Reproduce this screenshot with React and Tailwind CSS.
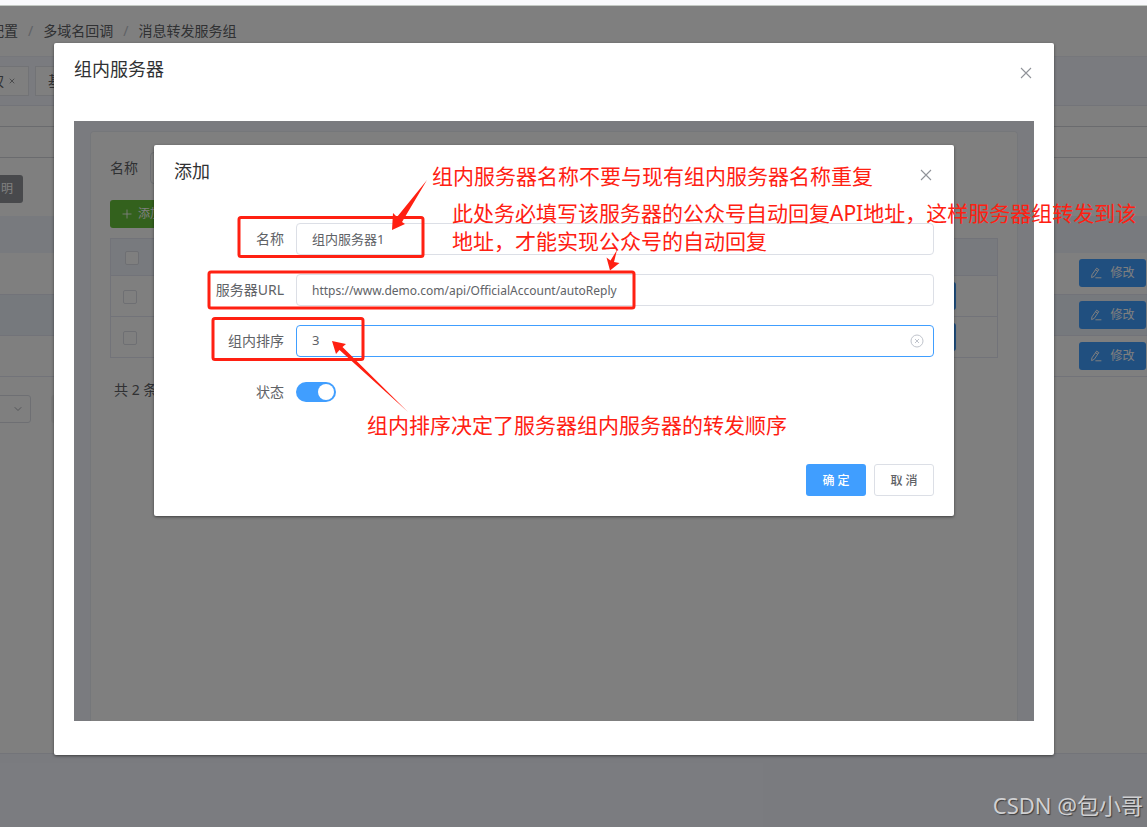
import React, { useState } from "react";
import { ChevronDown, Plus, X } from "lucide-react";

const crumbs = ["配置", "多域名回调", "消息转发服务组"];

function EditIcon() {
  return (
    <svg viewBox="0 0 12 12" className="h-3 w-3" fill="none" stroke="currentColor" strokeWidth="1">
      <path d="M6.6 1.2 L8.8 2.6 L4.2 9.4 L1.6 10.6 L1.9 7.9 Z" strokeLinejoin="round" />
      <path d="M5.6 2.8 L7.7 4.2 M5.4 10.8 H11.4" />
    </svg>
  );
}

function CloseIcon() {
  return (
    <svg viewBox="0 0 16 16" className="h-4 w-4" fill="none" stroke="currentColor" strokeWidth="1.1">
      <path d="M3 3 L13 13 M13 3 L3 13" />
    </svg>
  );
}

function EditButton() {
  return (
    <button className="inline-flex h-7 w-[67px] items-center justify-center gap-2 rounded-[3px] bg-[#409eff] text-xs text-white">
      <EditIcon />
      修改
    </button>
  );
}

// Service group list that sits behind the dialogs
function GroupPage() {
  return (
    <div className="-ml-4 flex flex-1 flex-col bg-[#f5f7ff]">
      <nav className="flex h-[51px] items-center gap-2 border-b border-[#eceef6] bg-white pl-[6px] text-sm text-[#606266]">
        {crumbs.map((item, index) => (
          <React.Fragment key={item}>
            {index > 0 && <span className="px-[2px] text-[#c0c4cc]">/</span>}
            <a href="#" className="whitespace-nowrap">
              {item}
            </a>
          </React.Fragment>
        ))}
      </nav>

      <div className="flex h-12 items-center gap-[6px]">
        <div className="flex h-[30px] w-[45px] items-center justify-end gap-1 overflow-hidden border border-[#e4e7ed] bg-white pr-3 text-sm text-[#606266]">
          <span>权</span>
          <X size={8} />
        </div>
        <div className="flex h-[30px] items-center gap-1 border border-[#e4e7ed] bg-white px-3 text-sm text-[#606266]">
          <span>基</span>
          <X size={8} />
        </div>
      </div>

      <main className="h-[649px] border-y border-[#e6e9f2] bg-white">
        <div className="h-[21px] border-b border-[#d4d6dc]" />
        <div className="h-[31px] border-b border-[#d4d6dc]" />
        <div className="flex h-[58px] items-center pt-1 pl-4">
          <button className="-ml-4 h-7 w-[39px] rounded-[3px] bg-[#909399] pr-[10px] text-right text-xs text-white">
            明
          </button>
        </div>
        <table className="w-full border-collapse text-sm">
          <thead>
            <tr className="h-[37px] bg-[#f0f4fd]">
              <th aria-label="服务组" />
              <th aria-label="修改" />
            </tr>
          </thead>
          <tbody>
            {[0, 1, 2].map((row) => (
              <tr
                key={row}
                className="h-[41px] border-b border-[#e4e7f2] even:bg-[#ecf3fb]"
              >
                <td />
                <td className="p-0 pr-px text-right align-middle leading-none">
                  <EditButton />
                </td>
              </tr>
            ))}
          </tbody>
        </table>
        <div className="flex gap-5 pt-[18px]">
          <button
            aria-label="每页条数"
            className="flex h-7 w-[47px] items-center justify-end rounded-[3px] border border-[#dcdfe6] pr-[6px] text-[#a8abb2]"
          >
            <ChevronDown size={12} />
          </button>
          <div className="h-7 w-8 rounded-[3px] bg-[#f4f4f5]" />
        </div>
      </main>
    </div>
  );
}

// Server list inside the outer dialog
function ServerList() {
  return (
    <div className="h-full bg-[#f5f7ff] px-4 pt-[10px]">
      <div className="h-full rounded-t border border-b-0 border-[#ebeef5] bg-white px-[19px] pt-5">
        <div className="flex h-8 items-center gap-3 text-sm text-[#606266]">
          <label htmlFor="keyword">名称</label>
          <input id="keyword" className="h-8 w-48 rounded border border-[#dcdfe6]" />
        </div>
        <button className="mt-4 flex h-7 w-[72px] items-center gap-1 rounded-[3px] bg-[#67c23a] pl-[10px] text-xs text-white">
          <Plus size={14} strokeWidth={1.5} />
          添加
        </button>
        <table className="mt-[10px] w-full border-collapse border border-[#e4e7f2]">
          <thead>
            <tr className="h-[37px] bg-[#f0f4fd]">
              <th className="w-12 pl-[14px] text-left leading-none">
                <CheckBox label="全选" />
              </th>
              <th />
            </tr>
          </thead>
          <tbody>
            {["组内服务器1", "组内服务器2"].map((name) => (
              <tr key={name} className="h-[41px] border-t border-[#e4e7f2]">
                <td className="pl-3 leading-none">
                  <CheckBox label={name} />
                </td>
                <td className="pr-[41px]">
                  <button aria-label="修改" className="ml-auto block h-7 w-16 rounded-[3px] bg-[#409eff]" />
                </td>
              </tr>
            ))}
          </tbody>
        </table>
        <p className="pt-[22px] pl-1 text-sm text-[#606266]">共 2 条</p>
      </div>
    </div>
  );
}

function CheckBox({ label }) {
  return (
    <input
      type="checkbox"
      aria-label={label}
      className="h-[14px] w-[14px] appearance-none rounded-xs border border-[#dcdfe6] bg-white align-middle"
    />
  );
}

function FormItem({ id, label, children }) {
  return (
    <div className="mb-[19px] flex h-8 items-center">
      <label htmlFor={id} className="w-[110px] shrink-0 pr-3 text-right text-sm whitespace-nowrap text-[#606266]">
        {label}
      </label>
      {children}
    </div>
  );
}

const inputClass =
  "block h-8 w-full rounded border border-[#dcdfe6] bg-white px-[15px] text-[#606266] outline-none focus:border-[#409eff]";

function AddDialog() {
  const [form, setForm] = useState({
    name: "组内服务器1",
    url: "https://www.demo.com/api/OfficialAccount/autoReply",
    sort: "3",
  });
  const [enabled, setEnabled] = useState(true);

  const change = (key) => (e) => setForm({ ...form, [key]: e.target.value });

  return (
    <section className="rounded-xs bg-white p-5 shadow-[0_1px_3px_rgba(0,0,0,0.5)]">
      <header className="flex items-start justify-between">
        <h2 className="text-lg leading-3 text-[#303133]">添加</h2>
        <button aria-label="关闭" className="pt-[2px] text-[#909399]">
          <CloseIcon />
        </button>
      </header>

      <form className="pt-[40px]" onSubmit={(e) => e.preventDefault()}>
        <div className="pl-3">
          <FormItem id="name" label="名称">
            <input id="name" value={form.name} onChange={change("name")} className={`${inputClass} pb-[2px] text-[13px]`} />
          </FormItem>
          <FormItem id="url" label="服务器URL">
            <input id="url" value={form.url} onChange={change("url")} className={`${inputClass} text-xs`} />
          </FormItem>
          <FormItem id="sort" label="组内排序">
            <div className="relative w-full">
              <input
                id="sort"
                value={form.sort}
                onChange={change("sort")}
                className="block h-8 w-full rounded border border-[#409eff] bg-white px-[15px] pb-[2px] text-[13px] text-[#606266] outline-none"
              />
              <button
                type="button"
                aria-label="清空"
                onClick={() => setForm({ ...form, sort: "" })}
                className="absolute inset-y-0 right-[10px] text-[#c0c4cc]"
              >
                <svg viewBox="0 0 14 14" className="h-[14px] w-[14px]" fill="none" stroke="currentColor">
                  <circle cx="7" cy="7" r="6" />
                  <path d="M5 5 L9 9 M9 5 L5 9" />
                </svg>
              </button>
            </div>
          </FormItem>
          <FormItem id="status" label="状态">
            <input
              id="status"
              type="checkbox"
              role="switch"
              checked={enabled}
              onChange={() => setEnabled(!enabled)}
              className="flex h-5 w-10 appearance-none items-center rounded-full bg-[#c0c4cc] px-[2px] before:h-4 before:w-4 before:rounded-full before:bg-white checked:justify-end checked:bg-[#409eff]"
            />
          </FormItem>
        </div>

        <div className="flex justify-end gap-2 pt-[37px] text-xs">
          <button type="submit" className="h-8 w-[60px] rounded-[3px] bg-[#409eff] pt-[2px] font-medium text-white">
            确 定
          </button>
          <button type="button" className="h-8 w-[60px] rounded-[3px] border border-[#dcdfe6] bg-white pt-[2px] font-medium text-[#606266]">
            取 消
          </button>
        </div>
      </form>
    </section>
  );
}

function Annotations() {
  return (
    <div className="pointer-events-none absolute inset-0 overflow-hidden text-[21px] leading-7 whitespace-nowrap text-[#ff2012]">
      <svg width="1147" height="827" className="absolute top-0 left-0" fill="none" stroke="#ff2012" strokeWidth="3">
        <rect x="239" y="217.5" width="184" height="39" rx="2" />
        <rect x="209" y="272" width="425" height="36" rx="2" />
        <rect x="213" y="318.5" width="150" height="41" rx="2" />
        <g fill="#ff2012" stroke="none">
          <path d="M427 180 L402 222 L405 224 L392 230 L393 213 L397 217 Z" />
          <path d="M408 412 L339.5 350 L336 354 L332 341 L346 344 L342.5 347 Z" />
          <path d="M617 250 L614 262 L619.5 263 L610 270.5 L606.5 257.5 L610.5 260.5 Z" />
        </g>
      </svg>
      <p className="absolute top-[162px] left-[432px]">组内服务器名称不要与现有组内服务器名称重复</p>
      <p className="absolute top-[199px] left-[452px]">
        此处务必填写该服务器的公众号自动回复API地址，这样服务器组转发到该
        <br />
        地址，才能实现公众号的自动回复
      </p>
      <p className="absolute top-[411px] left-[367px]">组内排序决定了服务器组内服务器的转发顺序</p>
    </div>
  );
}

function App() {
  return (
    <div
      lang="zh-CN"
      className="relative flex min-h-screen flex-col overflow-hidden bg-[#f9f9fc] font-['Noto_Sans','Noto_Sans_CJK_SC',sans-serif]"
    >
      <div className="h-[6px] shrink-0 border-b border-[#c3c8c3]" />

      <div className="relative flex flex-1 flex-col overflow-hidden">
        <GroupPage />
        <div className="absolute inset-0 bg-black/50 pt-[37px] pr-[93px] pl-[54px]">
          {/* Outer dialog */}
          <section className="rounded-xs bg-white px-5 pt-[18px] pb-[34px] shadow-[0_1px_3px_rgba(0,0,0,0.5)]">
            <header className="flex h-[60px] items-start justify-between">
              <h1 className="text-lg leading-4 text-[#303133]">组内服务器</h1>
              <button aria-label="关闭" className="pt-1 text-[#909399]">
                <CloseIcon />
              </button>
            </header>
            <div className="relative h-[600px] overflow-hidden">
              <ServerList />
              <div className="absolute inset-0 bg-black/50 px-20 pt-6">
                <AddDialog />
              </div>
            </div>
          </section>
        </div>
      </div>

      <Annotations />
      <p className="absolute right-1 bottom-1 text-[22px] leading-9 text-[#d0d0d2] [text-shadow:1px_1px_1px_rgba(0,0,0,0.5)]">
        CSDN @包小哥
      </p>
    </div>
  );
}

export default App;
